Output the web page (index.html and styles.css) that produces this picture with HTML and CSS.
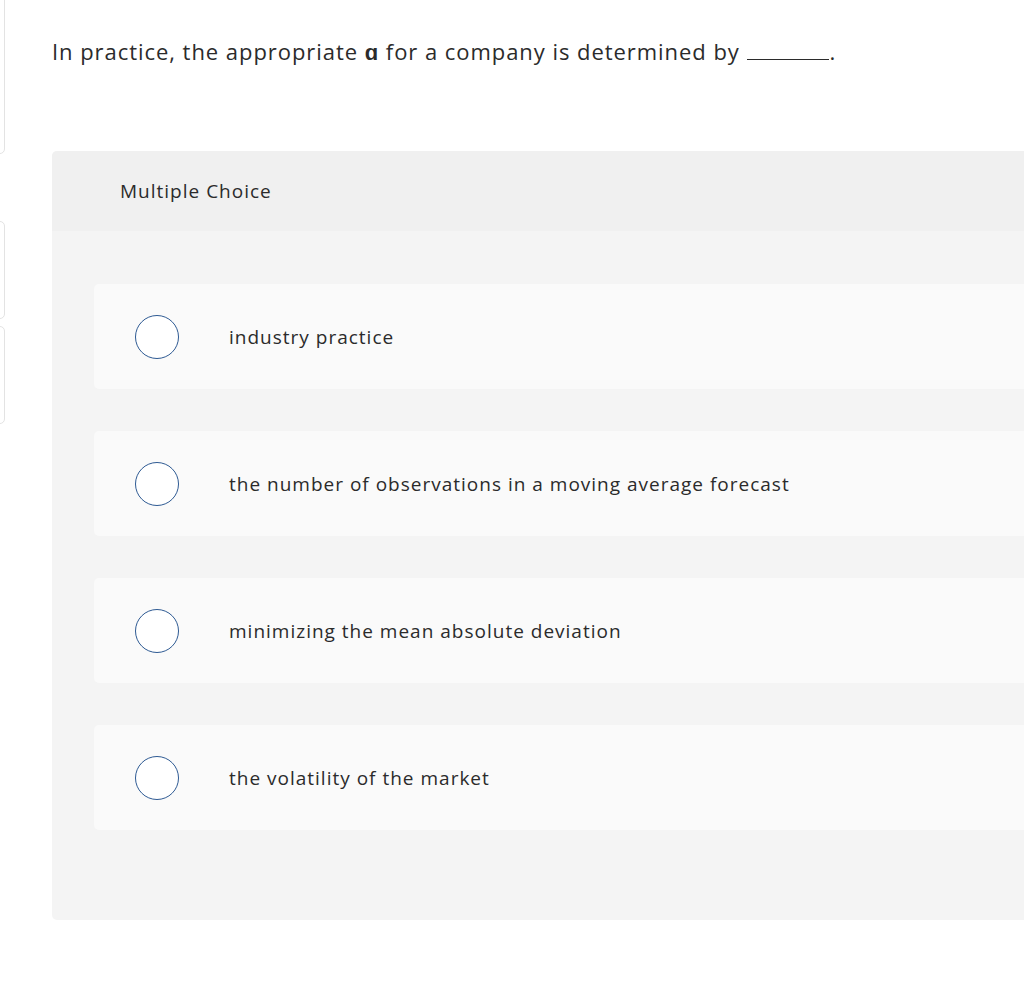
FILE: index.html
```html
<!DOCTYPE html>
<html lang="en">
<head>
<meta charset="utf-8">
<title>Multiple Choice</title>
<link rel="stylesheet" href="styles.css">
</head>
<body>
<div class="page">
  <div class="side">
    <div class="side-card side-card-1"></div>
    <div class="side-card side-card-2"></div>
    <div class="side-card side-card-3"></div>
  </div>
  <main class="main">
    <p class="question">In practice, the appropriate <span class="alpha">ɑ</span> for a company is determined by <span class="blank"></span>.</p>
    <section class="panel">
      <header class="panel-head">Multiple Choice</header>
      <div class="options">
        <label class="option"><span class="radio"></span><span class="opt-text">industry practice</span></label>
        <label class="option"><span class="radio"></span><span class="opt-text">the number of observations in a moving average forecast</span></label>
        <label class="option"><span class="radio"></span><span class="opt-text">minimizing the mean absolute deviation</span></label>
        <label class="option"><span class="radio"></span><span class="opt-text">the volatility of the market</span></label>
      </div>
    </section>
  </main>
</div>
</body>
</html>
```
FILE: styles.css
```css
html, body {
  margin: 0;
  padding: 0;
  background: #ffffff;
  overflow: hidden;
}
body {
  font-family: "Open Sans", "Liberation Sans", sans-serif;
  color: #2b2b2b;
}
.page {
  display: flex;
  width: 1024px;
  height: 996px;
  overflow: hidden;
}
.side {
  width: 52px;
  flex: none;
  position: relative;
}
.side-card {
  position: absolute;
  left: -20px;
  width: 25px;
  border: 1px solid #e3e3e3;
  border-radius: 5px;
  background: #fff;
  box-sizing: border-box;
}
.side-card-1 { top: -10px; height: 164px; }
.side-card-2 { top: 221px; height: 98px; }
.side-card-3 { top: 326px; height: 98px; }
.main {
  flex: 1;
  min-width: 0;
}
.question {
  margin: 34px 0 0 0;
  font-size: 22px;
  line-height: 34px;
  letter-spacing: 0.95px;
  color: #2b2b2b;
  white-space: nowrap;
}
.alpha {
  font-weight: 600;
}
.blank {
  display: inline-block;
  width: 82px;
  border-bottom: 1.5px solid #2b2b2b;
  margin-left: 1px;
  vertical-align: baseline;
}
.panel {
  margin-top: 83px;
  width: 1000px;
  height: 769px;
  background: #f4f4f4;
  border-radius: 5px 0 0 5px;
  overflow: hidden;
}
.panel-head {
  height: 80px;
  background: #f0f0f0;
  display: flex;
  align-items: center;
  padding-left: 68px;
  font-size: 19px;
  letter-spacing: 1px;
  color: #2b2b2b;
}
.options {
  display: flex;
  flex-direction: column;
  gap: 42px;
  padding: 53px 0 0 42px;
}
.option {
  display: flex;
  align-items: center;
  height: 105px;
  background: #fafafa;
  border-radius: 5px 0 0 5px;
  padding-left: 41px;
}
.radio {
  width: 42px;
  height: 42px;
  border: 1.6px solid #2e5a93;
  border-radius: 50%;
  background: #fff;
  flex: none;
}
.opt-text {
  margin-left: 50px;
  font-size: 19px;
  letter-spacing: 1px;
  color: #2b2b2b;
}
```
